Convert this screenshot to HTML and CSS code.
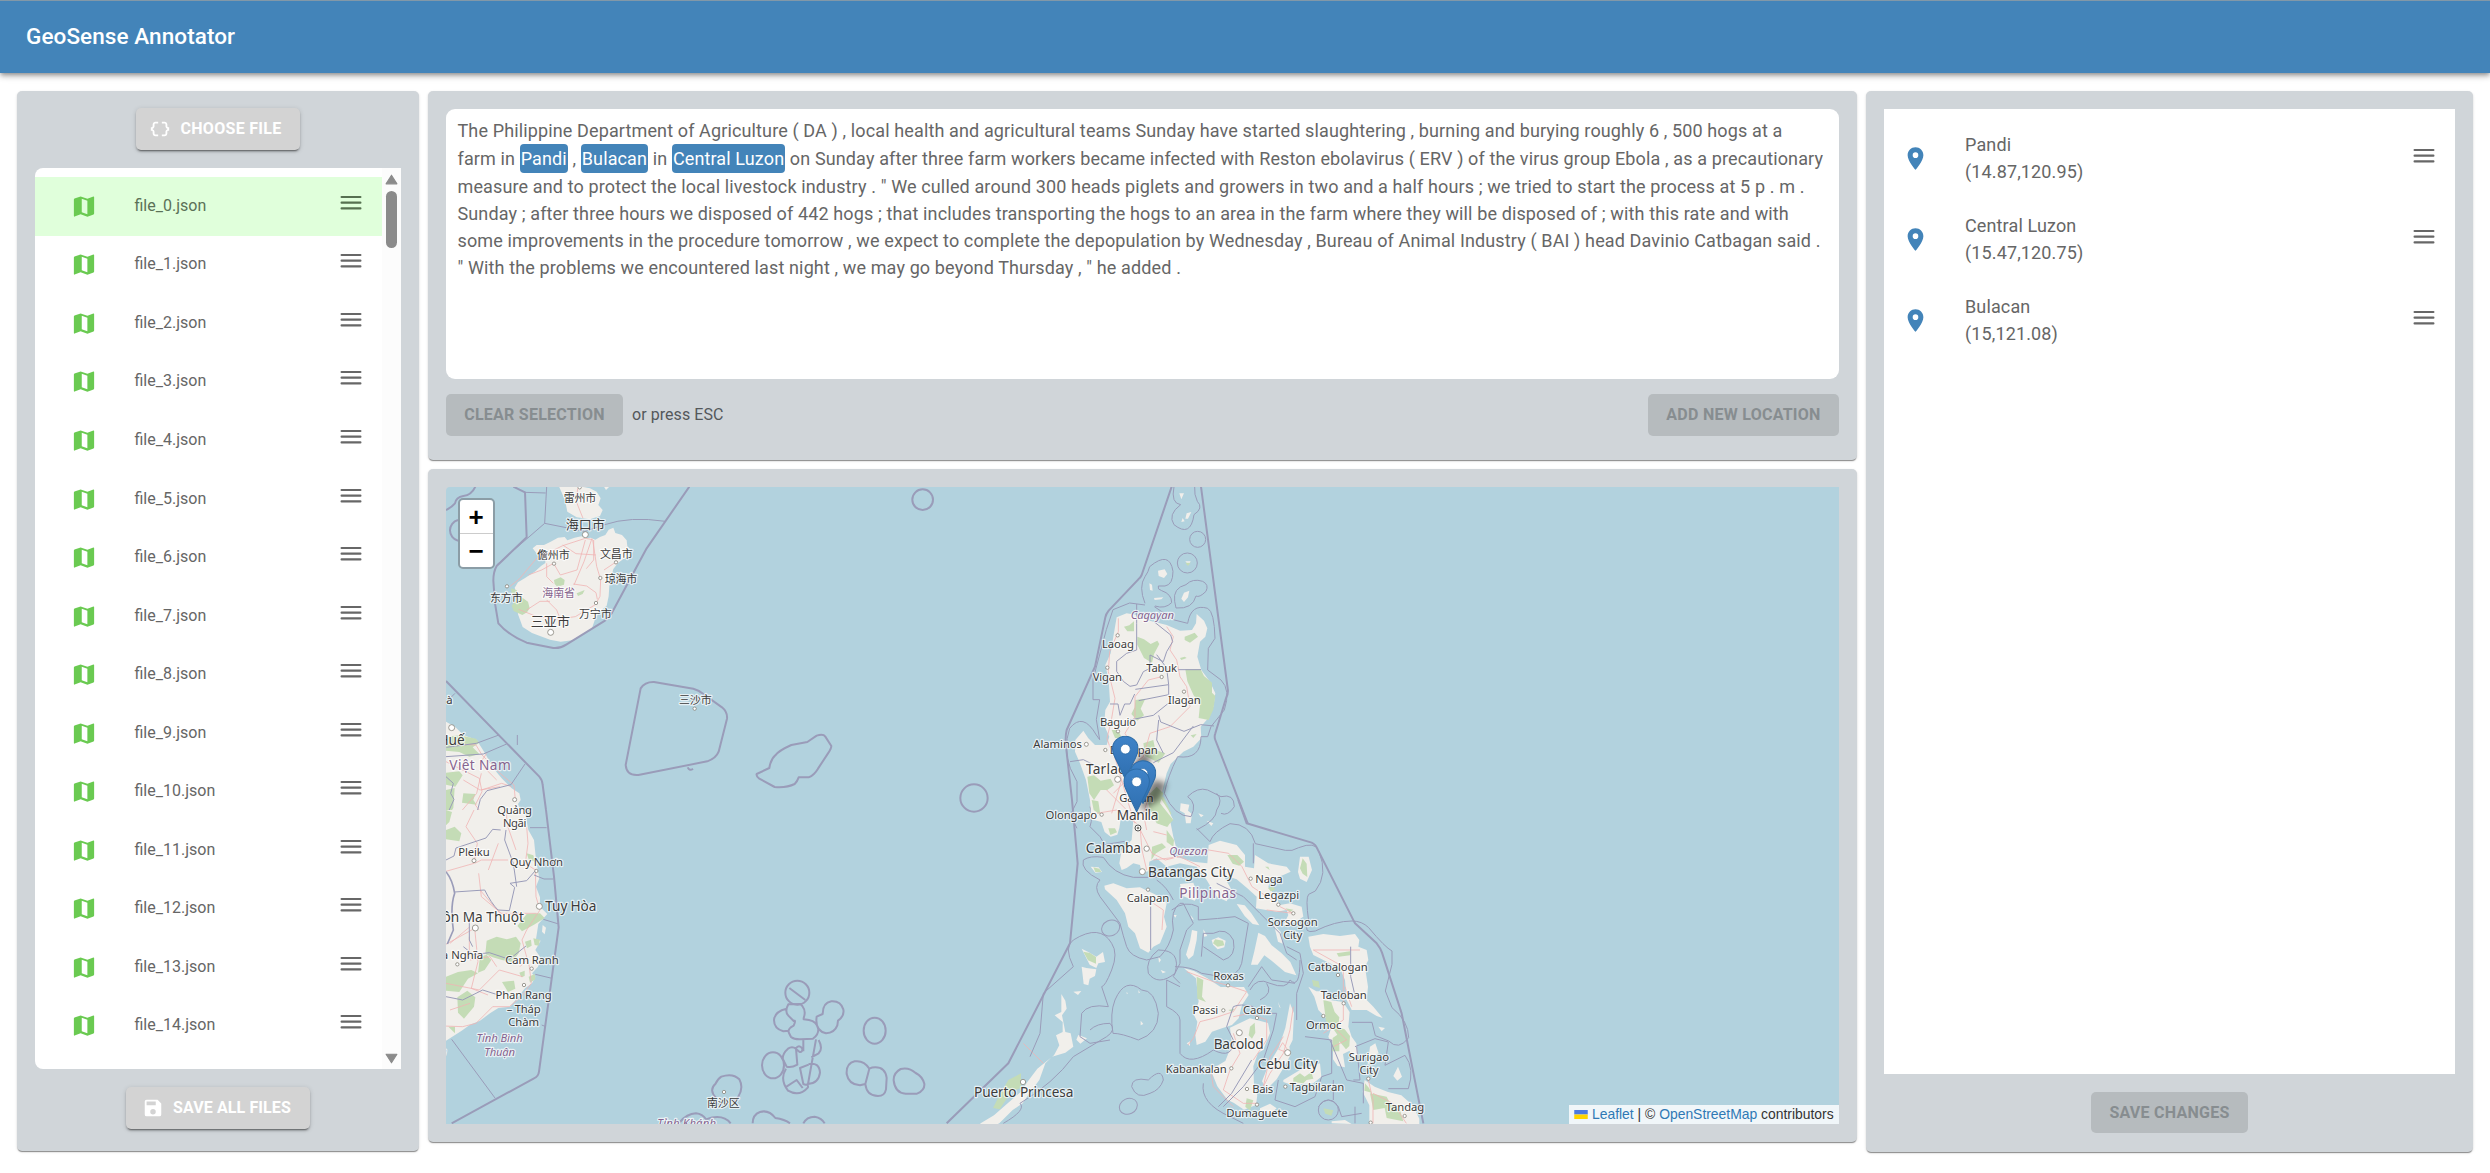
FILE: index.html
```html
<!DOCTYPE html>
<html lang="en">
<head>
<meta charset="utf-8">
<title>GeoSense Annotator</title>
<link rel="stylesheet" href="styles.css">
</head>
<body>
<svg class="sprite" aria-hidden="true">
  <symbol id="i-map" viewBox="0 0 24 24"><path d="M20.5 3l-.16.03L15 5.1 9 3 4.2 4.6C3.3 4.9 3 5.3 3 6v14.5c0 .28.22.5.5.5l.16-.03L9 18.9l6 2.1 4.9-1.7c.8-.3 1.1-.7 1.1-1.4V3.5c0-.28-.22-.5-.5-.5zM15 18.9l-5-1.8V5l5 1.9z"/></symbol>
  <symbol id="i-menu" viewBox="0 0 22 16"><path d="M1.600 .9h18.800a1.100 1.100 0 010 2.200h-18.800a1.100 1.100 0 010-2.200zm0 5.700h18.800a1.100 1.100 0 010 2.200h-18.800a1.100 1.100 0 010-2.200zm0 5.700h18.800a1.100 1.100 0 010 2.200h-18.800a1.100 1.100 0 010-2.200z"/></symbol>
  <symbol id="i-pin" viewBox="0 0 24 24"><path d="M12 2C8.13 2 5 5.13 5 9c0 5.25 7 13 7 13s7-7.75 7-13c0-3.87-3.13-7-7-7zm0 9.5a2.5 2.5 0 010-5 2.5 2.5 0 010 5z"/></symbol>
  <symbol id="i-save" viewBox="0 0 24 24"><path d="M17 3H5a2 2 0 00-2 2v14a2 2 0 002 2h14a2 2 0 002-2V7zm-5 16a3 3 0 110-6 3 3 0 010 6zm3-10H5V5h10z"/></symbol>
  <symbol id="i-braces" viewBox="0 0 24 24"><path d="M4 7v2c0 .55-.45 1-1 1H2v4h1c.55 0 1 .45 1 1v2c0 1.65 1.35 3 3 3h3v-2H7c-.55 0-1-.45-1-1v-2c0-1.3-.84-2.42-2-2.83v-.34C5.16 11.42 6 10.3 6 9V7c0-.55.45-1 1-1h3V4H7C5.35 4 4 5.35 4 7zm17 3c-.55 0-1-.45-1-1V7c0-1.65-1.35-3-3-3h-3v2h3c.55 0 1 .45 1 1v2c0 1.3.84 2.42 2 2.83v.34c-1.16.41-2 1.52-2 2.83v2c0 .55-.45 1-1 1h-3v2h3c1.65 0 3-1.35 3-3v-2c0-.55.45-1 1-1h1v-4z"/></symbol>
  <symbol id="i-marker" viewBox="0 0 25 41"><path d="M12.5.5C5.9.5.5 5.7.5 12.3c0 3 1.200 6 2.500 8.500L12.500 40.500 22 20.800c1.300-2.500 2.500-5.500 2.500-8.500C24.500 5.700 19.100.5 12.500.5z" fill="url(#pinfill)" stroke="#2e6da8"/><circle cx="12.500" cy="12.500" r="4.600" fill="#fff" stroke="#2e6da8" stroke-width=".7"/></symbol>
</svg>

<header class="appbar"><h1>GeoSense Annotator</h1></header>

<main class="layout">
  <section class="card files">
    <button class="btn raised choose"><svg><use href="#i-braces"/></svg>CHOOSE FILE</button>
    <div class="filebox">
      <ul class="filelist">
        <li class="on"><svg class="map-i"><use href="#i-map"/></svg><span>file_0.json</span><svg class="menu-i"><use href="#i-menu"/></svg></li>
        <li><svg class="map-i"><use href="#i-map"/></svg><span>file_1.json</span><svg class="menu-i"><use href="#i-menu"/></svg></li>
        <li><svg class="map-i"><use href="#i-map"/></svg><span>file_2.json</span><svg class="menu-i"><use href="#i-menu"/></svg></li>
        <li><svg class="map-i"><use href="#i-map"/></svg><span>file_3.json</span><svg class="menu-i"><use href="#i-menu"/></svg></li>
        <li><svg class="map-i"><use href="#i-map"/></svg><span>file_4.json</span><svg class="menu-i"><use href="#i-menu"/></svg></li>
        <li><svg class="map-i"><use href="#i-map"/></svg><span>file_5.json</span><svg class="menu-i"><use href="#i-menu"/></svg></li>
        <li><svg class="map-i"><use href="#i-map"/></svg><span>file_6.json</span><svg class="menu-i"><use href="#i-menu"/></svg></li>
        <li><svg class="map-i"><use href="#i-map"/></svg><span>file_7.json</span><svg class="menu-i"><use href="#i-menu"/></svg></li>
        <li><svg class="map-i"><use href="#i-map"/></svg><span>file_8.json</span><svg class="menu-i"><use href="#i-menu"/></svg></li>
        <li><svg class="map-i"><use href="#i-map"/></svg><span>file_9.json</span><svg class="menu-i"><use href="#i-menu"/></svg></li>
        <li><svg class="map-i"><use href="#i-map"/></svg><span>file_10.json</span><svg class="menu-i"><use href="#i-menu"/></svg></li>
        <li><svg class="map-i"><use href="#i-map"/></svg><span>file_11.json</span><svg class="menu-i"><use href="#i-menu"/></svg></li>
        <li><svg class="map-i"><use href="#i-map"/></svg><span>file_12.json</span><svg class="menu-i"><use href="#i-menu"/></svg></li>
        <li><svg class="map-i"><use href="#i-map"/></svg><span>file_13.json</span><svg class="menu-i"><use href="#i-menu"/></svg></li>
        <li><svg class="map-i"><use href="#i-map"/></svg><span>file_14.json</span><svg class="menu-i"><use href="#i-menu"/></svg></li>
      </ul>
      <div class="scroll">
        <svg viewBox="0 0 12 10"><path d="M6 1l5 8H1z"/></svg>
        <i class="thumb"></i>
        <svg class="down" viewBox="0 0 12 10"><path d="M6 9L1 1h10z"/></svg>
      </div>
    </div>
    <button class="btn raised saveall"><svg><use href="#i-save"/></svg>SAVE ALL FILES</button>
  </section>

  <div class="center">
    <section class="card textcard">
      <div class="doc">The Philippine Department of Agriculture ( DA ) , local health and agricultural teams Sunday have started slaughtering , burning and burying roughly 6 , 500 hogs at a farm&nbsp;in&nbsp;<mark>Pandi</mark> , <mark>Bulacan</mark> in <mark>Central Luzon</mark> on Sunday after three farm workers became infected with Reston ebolavirus ( ERV ) of the virus group Ebola , as a precautionary measure and to protect the local livestock industry . " We culled around 300 heads piglets and growers in two and a half hours ; we tried to start the process at 5 p . m . Sunday ; after three hours we disposed of 442 hogs ; that includes transporting the hogs to an area in the farm where they will be disposed of ; with this rate and with some improvements in the procedure tomorrow , we expect to complete the depopulation by Wednesday , Bureau of Animal Industry ( BAI ) head Davinio Catbagan said . "&nbsp;With the problems we encountered last night , we may go beyond Thursday , " he added .</div>
      <div class="actions">
        <button class="btn off clear">CLEAR SELECTION</button>
        <span class="hint">or press ESC</span>
        <button class="btn off add">ADD NEW LOCATION</button>
      </div>
    </section>

    <section class="card mapcard">
      <div class="map">
        <svg class="tiles" viewBox="446 487 1393 637">
          <defs>
            <linearGradient id="pinfill" x1="0" y1="0" x2="0" y2="1"><stop offset="0" stop-color="#3f83c8"/><stop offset="1" stop-color="#2f6fb0"/></linearGradient>
            <filter id="soft" x="-50%" y="-50%" width="200%" height="200%"><feGaussianBlur stdDeviation="9"/></filter>
          </defs>

          <!-- Hainan and central Vietnam -->
          <g transform="translate(430 460) scale(.33333)">
            <g class="land">
              <path d="M385 75L405 120 412 155 440 172 480 178 510 168 518 150 505 135 512 115 500 95 480 85 455 80z"/>
              <path d="M522 80l6 10 10-10z"/>
              <path d="M308 265l12-10 22 0 20-10 22-12 20-2 8 10 22-8 20-4 18 6 10-2 14 6 14-8 16-6 10-16 14-6 6 16 20 6 14 16 2 18 10 10-6 20-16 8-16 12-14 18-6 22-6 30-2 30-6 28-22 18-14 26-8 24-26 18-34 18-34 4-32-6-28-10-26-10-28-18-14-38-2-40-4-26-4-14 10-16 20-12 30-20 20-18 12-8 0-12-18-6z"/>
              <path d="M48 785L75 800 100 825 140 840 165 880 190 925 215 955 245 985 268 1000 272 1020 264 1032 290 1100 48 1100z"/>
            </g>
            <g class="wood">
              <path d="M260 415l14-4 20 14 5 20-8 12-14 8-26-12-6-16zM372 360l20-8 12 8-2 14-20 6-8-8zM243 385l18 6-2 10-14 2zM440 400l24-10-6 12-14 6z"/>
              <path d="M48 830l40-4 50 10 10 12-20 14 20 20-30 8-30-14-40-4zM48 938l40-4 10 12-22 34-28-6zM100 1000l36 2-6 18 10 14-44-6zM48 990l26-6-4 60-22 34z"/>
            </g>
            <g class="road">
              <path d="M443 85l-4 40 20 50M466 235l-68 22-80 40-50 60-28 22M466 235l22 4 12 80 12 40-2 50-14 25-60 36-60 8-60-10-50-20M486 235l-24 70-30 70M466 240l-25 90-50 15-20-35-36 20-40 15M430 372l40 6 28 20 4 20M350 420l30 30 12 30M398 255l40 26 60 4M522 330l36-24M491 240l0 60-22 26M290 450l40-26 30 0M350 310l0 40 20 20"/>
              <path d="M48 850l90 5 18 30 60 60 36 30 4 45M48 905l100 50 8 40-20 40 30 40M155 990l60-20 30 10M100 960l50 30 60-10M80 1070l60-70 14-60M170 880l-20 30 50 50"/>
            </g>
            <g class="line thin">
              <path d="M350 80l-6 110 120 24 60-20Q600 168 706 184M344 190L200 315M285 97l62 2M207 825l-68 25-90 12M230 852l-70 30-112 8M285 912l-42 62-72 18-20 26-10 40M75 700l-26 26"/>
              <path d="M48 950l22 20-8 30 10 18-18 40M262 855l0-30"/>
            </g>
            <g class="line">
              <path d="M136 80Q125 105 100 108 78 112 75 130 65 142 48 150M84 180a32 32 0 000 62M250 80l35 17 5 135L200 318Q190 335 190 362L195 430 205 490Q235 525 290 548L370 564Q390 566 410 553L525 482 545 460 650 265 778 80"/>
              <path d="M48 663L328 950Q337 960 338 975L348 1050"/>
              <path d="M632 685Q645 665 672 666L790 686Q806 690 820 702L876 742Q893 756 891 776L866 875Q858 895 832 904L625 945Q590 948 587 915zM773 922q6 12 16 4"/>
              <path d="M980 942l38-18q4-26 18-38 10-14 48-31l48-9 28-19q20-6 26 3l18 28q0 8-10 22l-30 46q-12 20-28 26l-30 0q-4 12-12 20-24 12-60 9l-46-25q-10-8-8-14z"/>
              <circle cx="1478" cy="119" r="31"/>
            </g>
            <g class="town"><circle cx="466" cy="224" r="9"/><circle cx="449" cy="82" r="5"/><circle cx="372" cy="311" r="5"/><circle cx="558" cy="307" r="5"/><circle cx="511" cy="354" r="5"/><circle cx="231" cy="379" r="5"/><circle cx="498" cy="429" r="5"/><circle cx="362" cy="517" r="9"/><circle cx="794" cy="746" r="5"/><circle cx="65" cy="803" r="9"/></g>
            <g class="label han">
              <text x="450" y="127" textLength="98">雷州市</text><text x="466" y="206" class="big" textLength="118">海口市</text><text x="370" y="297" textLength="98">儋州市</text><text x="559" y="293" textLength="98">文昌市</text><text x="573" y="369" textLength="98">琼海市</text><text x="386" y="411" textLength="98" class="region">海南省</text><text x="229" y="425" textLength="98">东方市</text><text x="361" y="499" class="big" textLength="118">三亚市</text><text x="496" y="474" textLength="98">万宁市</text><text x="796" y="731" textLength="98">三沙市</text>
            </g>
            <g class="label"><text x="49" y="732" class="start">à</text><text x="104" y="854" class="big end">Huế</text><text x="150" y="930" class="big region" textLength="184">Việt Nam</text></g>
          </g>

          <!-- southern Vietnam and the Spratlys -->
          <g transform="translate(430 810) scale(.33333)">
            <g class="land"><path d="M48 0L268 0 284 0 295 60 312 90 318 150 328 205 318 230 330 262 330 290 352 312 325 342 318 388 332 392 316 420 330 440 324 470 306 490 316 500 306 520 285 535 265 560 240 590 205 594 180 610 150 632 120 644 95 662 48 692z"/><path d="M338 345l10 8-4 20-8-8z"/></g>
            <g class="wood">
              <path d="M48 60l26-10 20 20-6 24-40-6zM48 0l18 6-8 30-10 10zM290 312l40-2 14 14-32 20-36 20-14-16zM290 130l20 6 6 20-20-8zM170 392l30-12 30 8 28-8 14 20-6 30-20 26-30-6-28-8-22-10zM48 500l36-14 40-6 20 10-30 16-26 40-40-4zM82 562l30-20 24 20-4 28-30 36-18-18zM150 440l20-6 14 16-20 30-20 8zM216 516l36-4 4 24-22 10zM285 395l18-6 2 18-14 8zM310 385l20 4-4 18-12-2zM296 500l18-8 2 16-16 10zM55 650l20 0 0 20zM268 488l16-6 0 16-10 4z"/>
            </g>
            <g class="road">
              <path d="M230 0l0 40 28 80M290 50l4 50-8 60 30 20 2 80 12 40-40 60-14 30 22 80 6 50-30 40-36 30-50 0-50 50-40 10-60-2M132 0l-24 50 34 50-10 60-84 24M146 190l8 70 60 50 60 4M134 160l20-10 80 0M134 355l-90 50M134 355l10 100-20 80 50 20M60 400l60-50M48 520l100 20 60-60 70 20M200 470l-20-30-60 10M205 100l-30 80M270 470l20-20M150 240l60 70 110 0M60 600l60-20M118 380l0 50-20 20"/>
            </g>
            <g class="line thin">
              <path d="M300 53l50 0M312 195l30 12 28 0M340 328l46 14M316 493l50 12M335 645l10 4M65 688l130 176"/>
              <path d="M74 246l90-6q20 40 40 60l34 2 16-70-14-12 50-8 26-30M48 150l24-12 6-24 90-30 20-26 24 2M228 60l-4 30 26 70 10 70M48 560l50 10 60-30 44 14M100 410l30 24 48-6 60 20 50-40M118 330l0 60 10 20"/>
              <path d="M48 185q20 25 26 65-14 40-4 110l-18 42" stroke-width="5"/>
            </g>
            <g class="line">
              <path d="M348 0L372 200 386 352 327 785Q325 800 312 805L65 940"/>
              <circle cx="1102" cy="548" r="36"/><path d="M1078 534l48 36M1075 583q-12 22 0 34l16 16q8-4 0 14-20 10-14 22l6 12q10 8 30 7l36-2q16-10 16-28-4-24-28-28l-16-2 0-4q8-20-4-36l-6-6zM1070 596q-36 8-38 34 0 26 28 34l16-2M1160 620q-6 42 28 50 26-2 34-24l2-14q20-14 16-34-8-26-36-24-26 4-26 38zM1120 690l0 34M1158 688l-24 134q-6 4-14 0l-10-48 26-10M1166 690q14 26 0 40l-22 12M1097 716q10-14 20 0 0 12-8 10zM1098 716q-12-8-24 0-16 14-16 30l12 24q14 4 32-6zM1068 776q-20 32 6 66 34 20 60-10l0-6M1066 832l34-22 18 24M1136 762q32-6 34 26-4 32-36 34"/>
              <ellipse cx="1029" cy="766" rx="33" ry="39"/><ellipse cx="1334" cy="662" rx="33" ry="39"/><path d="M1318 776q-16-26-44-22-26 6-24 38 6 32 40 34l16-4q4 36 38 36 20 0 24-20l2-34q-4-32-34-32-10 0-18 4zM1318 776l-12 46M1412 777q-22 12-21 34 4 38 36 40l34 0q24-10 22-30-6-22-26-32-20-18-45-12zM858 864q-22-24-2-42 8-16 18-22 34-12 54 8 14 26-4 54-8 10-14 6"/>
              <path d="M750 936q20-24 48-26 20 2 30 18 50-18 74 12M968 940q0-26 22-34 26-8 46 18 28 4 44 16M1120 940q10-20 34-20 22 4 30 20"/>
            </g>
            <g class="town"><circle cx="254" cy="-31" r="6"/><circle cx="132" cy="152" r="6"/><circle cx="319" cy="183" r="5"/><circle cx="328" cy="289" r="9"/><circle cx="136" cy="354" r="9"/><circle cx="82" cy="463" r="5"/><circle cx="305" cy="476" r="5"/><circle cx="282" cy="525" r="5"/><circle cx="882" cy="846" r="5"/></g>
            <g class="label">
              <text x="254" y="12" textLength="104">Quảng</text><text x="254" y="52" textLength="70">Ngãi</text><text x="132" y="137" textLength="94">Pleiku</text><text x="319" y="168" textLength="160">Quy Nhơn</text><text x="346" y="304" class="big start" textLength="153">Tuy Hòa</text><text x="282" y="336" class="big end">uôn Ma Thuột</text><text x="159" y="448" class="end">a Nghĩa</text><text x="306" y="461" textLength="160">Cam Ranh</text><text x="281" y="567" textLength="169">Phan Rang</text><text x="281" y="608" textLength="102">– Tháp</text><text x="281" y="647" textLength="92">Chàm</text>
              <text x="209" y="697" class="region it" textLength="139">Tỉnh Bình</text><text x="209" y="738" class="region it" textLength="92">Thuận</text><text x="770" y="951" class="region it" textLength="176">Tỉnh Khánh</text><text x="50" y="736" class="region it end">n</text>
            </g>
            <g class="label han"><text x="880" y="891" textLength="98">南沙区</text></g>
          </g>

          <!-- Luzon, south half and the Visayas -->
          <g transform="translate(940 800) scale(.33333)">
            <g class="land">
              <path d="M450-20L456 30 462 60 484 66 494 96 512 110 532 104 538 84 545 40 565 40 580 60 575 120 545 150 538 190 545 210 560 204 580 190 600 195 605 218 625 214 628 185 650 175 680 200 720 190 770 200 800 240 830 290 860 304 875 270 850 225 890 238 922 265 950 290 948 325 1010 335 1040 330 1045 345 1030 375 1060 370 1090 350 1085 320 1050 310 1020 315 1005 285 985 262 990 240 1030 225 1052 215 1040 200 985 190 945 165 942 205 915 200 915 165 890 135 840 122 806 135 802 190 760 185 690 165 708 140 700 110 690 60 660-20z"/>
              <path d="M493 257L520 250 560 265 600 262 660 290 680 310 672 350 680 380 660 430 640 440 625 458 600 445 585 400 565 380 555 340 530 300 495 268z"/>
              <path d="M722 10l26 4-4 18 12 10-4 28-14 0-4-30-14-8zM775 40l16 6-8 6zM800 62l20 8-6 8zM720 252l40-4 14 40-10 14-36-14zM1080 170l26 0 10 40-16 36-20-10-6-20zM452 200l24 2 10 14-20 2zM700 345l10 0-4 8zM752 345l10 14-6-2zM756 390l16 4-2 26-10 46-14 12-8-14 12-40zM790 388l12 20-10 2zM815 420l20-8 22 10-4 20-20 6-14-14zM890 312l24 4 20 24 24 36-20-4-24-24zM955 398l20 10 20 28 30 24 26 26 18 40-34-10-40-34-22-16-20 28-20 0 10-40zM1002 375l20 20 6 36-14-6zM1105 410L1150 402 1200 408 1245 402 1258 420 1255 440 1280 450 1285 480 1275 500 1284 560 1280 600 1300 620 1328 654 1310 648 1280 630 1235 630 1220 600 1215 540 1200 505 1180 495 1120 465 1110 440zM1105 560l24 14 20 0 20 26 40 6 20 30-4 44 10 30 14 20 6 36-20 10-6-24-20 10 6 40-22-4-14-20 0-40-14-28 10-30-20-30-20-20-12-40z"/>
              <path d="M425 446l20 10 24 14 20-14 6 30-20 4-6 14-20-10zM425 500l14 4 30 4-4 20-16 8-4 20-14-4zM400 575l24-2-10 12zM364 582l12 20 4 24-14 20 10 50 16 4 8 40-24 18-40 12-20 20-18 50-30 40-20 30-30 20-40 40-90 40 34-40 40-24 80-70 20-30 30-40 50-40 16-30-10-30 20-10 0-30-24-20 20-10zM415 705l26 10-20 16-12-12z"/>
              <path d="M732 505l30 8 40 22 40 26 70 0 14 24-20 30-10 40-20 20-30 10-30 10-20 30-26 10-4-30 6-40-10-20 14-40-8-70zM930 655l54 14 6 30-20 50-16 10-14 40 2 56 10 30-4 30-36 14-30-20-20-10-30-40-20-50 44-26 20-50-6-50zM1050 610l12 30-4 80-10 20 4 24-18 34-24 40-30 30-14-24 20-50 30-50 20-60zM1030 840l50-30 60-20 4 40-24 20-66 4-24-8zM1014 605l8 20-4-4zM960 925l30-14 20 14-20 16-30-4zM740 730l10-6 0 14zM1374 800l12 30-14 12-12-14zM1274 840l30 20 40 16 40 10 34 30 20 40 0 20-150 0 0-60-20-40zM1175 970l0-6 40-4 20 12zM1290 740l16-10 10 30-20 10-14 30zM1315 680l20 4-10 10zM595 570l5 8-4 2zM602 662l8 10-8 4zM560 575l4 6-4 0zM655 470l8 10-6 8zM662 510l16 6-10 4z"/>
            </g>
            <g class="wood">
              <path d="M640-10l30 0 24 50-10 40-30-10-4-30zM505 85l20 0 6 12-20 8zM680 90l22 30-2 20-20-14zM636 140l30-10 12 12-30 18-14 20zM862 165l30 0 20 20-14 12-20-6zM975 200l10 0 4 10zM1088 175l12 16 2 40-14-10-8-16zM460 202l18 4 6 10-18 0zM984 264l16-4 6 10-14 4zM1036 325l24 4-10 8zM825 418l24 4 4 14-20 4-14-10zM430 455l20 4 18 12 0 20-24-10zM1116 540l20 4 4 20-20-6zM1190 460l40-6 0 12-34 4zM1150 600l24 6 10 30 14 16-4 30 20 6 16 20-2 30-10 10-20-24 0 30-22 0 2-40 14-10-14-20-20-20zM770 530l20 10-4 50 12 16-26-10zM930 680l14-12 2 30-10 18-10-10zM865 630l20-4-10 10zM1060 834l20-14 14 10 20-14 6 20-20 4-10 10-30-4zM920 895l20 6-10 30-14-10zM205 840l38-20 0 44-30 10-14 24-20 30-20-4 20-40zM1275 850l12 14 8 14-22-6zM1290 880l50 10 10 20 30 20 10 34-50-10-6-30-34 6zM1150 925l30 6-6 16-18-6z"/>
            </g>
            <g class="road">
              <path d="M450 20l70 22 50-5M600 80l6 70 14 60M596 80l40 80 40 20 80-20 50-10 60 10 40 40 30 60 60 40M640 180l80-10 60 30M640 95l40 10M1020 320l40 20-80-10M740 515l80 30 40 10 60 20-40 60-60 20-40 10-20 50-16 20M880 650l50-10 50 20 0 60-40 60M880 700l20 60-30 50-20 60 60 40 40 0M810 800l10 60 60 60M1060 620l-10 70-20 70-40 60-20 40 20-90 40-60M1042 758l-26-10 12-20 14 20M1150 700l60-40 0-120 0-40-90-50 140 0M1215 560l20 60M640 310l30 20-4 60M1190 690l30 30-40 20M1285 840l14 60 0 70M1299 880l60 30 40 60M250 730l60 60"/>
            </g>
            <g class="line thin">
              <path d="M632 320l0 130M1232 440l0 90 16 70M450 20q10 30 0 60l30 30 14 24 60-10M430 180q20-14 60-8 30 50 90 60l70 0M430 180q-10 30 50 60-20 20 0 50l60 80q10 40 20 70 10 30 60 40l40-10q30-30 40-80-10-60 20-80l10 0 30 60-20 20-20 60 0 40-20 40 20 20M650 240q30 20 50 60M695 330q40-30 80-10l0 40q60-4 110-10l40 20-10 60-10 60q-10 40-60 40l-60-10q-30-20-80-20M790 440l60 40q40-10 30-60-20-40-60-20l-30 0-6 70M770 90q60-30 60-60 20-30 0-50M770 85l40 40q10-30 60-54 60 0 76 60l90 20q20 4 40-8 50-20 60 10 30 70-10 120l-20 10q-10 10 0 80-20 40 20 30 60-30 110-30 30 0 50 20 50 60 70 70l0 40-20 80 20 50q50 40 50 90-30 40-60 10l-40-16-10-40-60 0M940 130l0 60M830 250l80 40 50 50 60 60 20 60 30 20M1040 440l40 20 10 60-20 60 0 80M930 570q20-40 60-20 50 20 60-10 30 30 30-60M925 560l40-60 30 40 70 10M960 600q40-20 20-50M1000 690l10-50-60 0M720 560l-40-20 0 80q40 20 40 40l0 100q30 40 100-10 60 30 60-30l-20-40 20-60q20-10 60 0M1000 690l-30 90-60 80-60 60M790 850q-10 60 80 100l40 20M1015 840l-10 60 60 20 60-30 20-60 30-10 0-100-80-10M1170 720l50 120 50 10 0 60M1245 740l60-24 40 10-10 70 60-30q30 40 10 100l-60 0M1250 740l10 100-20 0M1180 840l0 60M1135 920q30-40 60 0l10 30 60-10M1245 920l0 50M400 500q-30-60 0-80 80-50 115 10 20 30 0 80-20 50-30 50l20 60q-60-10-80 20l-5 70 30 20 60-10M400 500l-90 80-10 120-30 70M190 970q70-40 50-60 100-60 160-140l100-60q30-20 10-40-40 0-60 20M525 600q30-70 80-30 40 0 50 70 0 60-60 80-50-20-76-20-10-60 6-100zM575 860q0-30 50-20 40-40 45 0-10 30-40 40-40 20-55-20M625 520q-10-40 30-70 70 0 50 70-50 40-80 0M935 780l-60 100-40 40"/>
              <ellipse cx="512" cy="384" rx="28" ry="23" transform="rotate(-25 512 384)"/><ellipse cx="565" cy="919" rx="28" ry="23" transform="rotate(-25 565 919)"/>
              <circle cx="1165" cy="930" r="30"/>
            </g>
            <g class="line">
              <circle cx="102" cy="-6" r="41"/>
              <path d="M396 0L413 190 390 430 205 790 20 970M895 0L920 70 1115 128Q1127 133 1133 148L1245 370 1310 430Q1322 445 1326 458L1385 640 1450 970"/>
            </g>
          </g>

          <!-- Luzon, north half -->
          <g transform="translate(980 480) scale(.33333)">
            <g class="land">
              <path d="M410 412L440 400 470 405 500 420 560 435 600 452 636 450 648 430 650 402 672 422 682 445 676 470 660 485 652 530 664 570 690 605 706 640 700 680 680 720 662 740 664 775 640 800 610 815 572 852 560 880 550 920 542 955 565 990 580 1020 335 1020 330 960 318 900 300 850 285 815 286 780 310 752 325 775 345 795 380 795 388 770 372 735 376 690 390 665 386 600 376 555 392 520 400 470z"/>
              <path d="M534 272l20-4 8 14-10 12-16-6zM598 40l14 0-8 18zM620 100l14-4-10 20-8 0zM608 114l6 10-10 2zM508 310l8 4 2 18-8-2zM522 354l28-2-6 6-20 2zM612 338l16-6-4 20-12 14-8-10zM616 244l16 0-6 12z"/>
            </g>
            <g class="wood">
              <path d="M472 470l20 8 20 14 20-10 6 10-16 30-6 26-24-14-20-40zM616 568l46 0 10 20 24 20 0 30 10 10-6 40-14 32-30-6 4-40-20-30-18-40zM614 470l30-12 10 12-24 18-16-8zM600 534l14-4 6 4-16 6zM432 440l16-4 14-12 0 30-20 0zM466 660l30-4-14 30 10 20-20 16-18-20 10-20zM490 790l30-10 6 30 30 10-20 28-40-20zM322 890l20-4 20 16 30-6 10 20-20 14-20 0-20 30-14-20zM335 960l20 4 6 40-20-14zM530 920l20 20-10 30 40 50-20 20-30-10-20-40-10-40zM395 750l20 0 10 24-20 0zM616 248l16 0-8 10zM632 766l18-4-10 12z"/>
            </g>
            <g class="road">
              <path d="M415 415l0 40-26 60-4 60 20 80-10 60-14 60 10 30M560 440l20 30-10 40 20 30 10 50 20 30 10 60-60 60-60 20-20 70-40 30M545 590l-40 10-40 50 0 60-30 50 30 50M395 800l30 100-30 100M425 900l20 70 20 60M380 930l60 60M460 880l50 60-20 60 10 50M350 1000l60-10 60 40M400 940l30-30 60 20"/>
            </g>
            <g class="line thin">
              <path d="M470 400l0 30 0 80-30 10-30 24 0 30 20 30 20 15 20-4 20-40 20-10 0-40 40 20 10-30 18-30-6-20-50-40M530 524l30 40 6 50-100 14M595 569l68 0M566 614l0 30-90 18M390 672l24 0 6 34 14-34 16 0 14-30M450 720l70-14 50-40M536 706l6 20 70 28 50-20 40 4M640 738l-60 80-60 30M536 720l-6 60 20 40M270 845l40-6 60 30"/>
              <path d="M495 375l-46-6-50 20-20 60-40 150 0 60 20 0-10 60 10 60-10-14q-40-70-80-20-20 60 2 120l20 40 0 60-20 40 20 40M523 380l60 40 40 10q10-60 60-45 20 10 22 90l-20 30-2 65 40 30q30 30 10 90l-40 50-10 30-20 0q0 70-70 60-30 60-40 110 30 70 80 70 20-40-10-60 30-30 60-20l40 20q40-10 40 30-20 30-40 20"/>
              <path d="M582 20q-10 50 20 54-40 30-20 60 50 40 60-30 30-20 10-40-10-20-8-44M495 370q-20-50 0-80 10-14 14-30 60-50 70 14 0 40-24 44l-20 0q-4 10 10 14 30 10 30 36-20 20-50 10M584 364q-6-40 34-50 20-20 50-10 20 10 10 30-20 20-30 14-10 40-60 36zM470 372l0 30"/>
              <circle cx="653" cy="178" r="24"/><circle cx="622" cy="249" r="30"/>
            </g>
            <g class="line"><path d="M575 20L485 285Q482 292 475 298L386 392Q378 402 376 412L345 560 260 750Q256 765 257 790L276 960M663 20L743 625Q746 640 738 655L706 760Q702 770 706 780L803 1030"/></g>
          </g>

          <g transform="translate(940 800) scale(.33333)">
            <g class="town"><circle cx="485" cy="44" r="5"/><circle cx="594" cy="84" r="9" stroke="#333"/><circle cx="594" cy="84" r="3" fill="#333"/><circle cx="620" cy="146" r="8"/><circle cx="607" cy="215" r="9"/><circle cx="624" cy="269" r="5"/><circle cx="932" cy="236" r="5"/><circle cx="1015" cy="314" r="5"/><circle cx="1060" cy="340" r="5"/><circle cx="864" cy="556" r="5"/><circle cx="850" cy="631" r="5"/><circle cx="951" cy="654" r="5"/><circle cx="1194" cy="525" r="5"/><circle cx="1211" cy="610" r="5"/><circle cx="1150" cy="648" r="5"/><circle cx="898" cy="698" r="9"/><circle cx="1043" cy="758" r="9"/><circle cx="874" cy="805" r="5"/><circle cx="921" cy="867" r="5"/><circle cx="1036" cy="860" r="5"/><circle cx="951" cy="914" r="5"/><circle cx="1285" cy="836" r="5"/><circle cx="1394" cy="948" r="5"/><circle cx="1292" cy="968" r="5"/><circle cx="249" cy="846" r="8"/></g>
            <g class="label">
              <text x="394" y="56" textLength="155">Olongapo</text><text x="593" y="61" class="big" textLength="125">Manila</text><text x="520" y="159" class="big" textLength="165">Calamba</text><text x="745" y="164" class="region it" textLength="115">Quezon</text><text x="753" y="230" class="big" textLength="258">Batangas City</text><text x="987" y="248" textLength="82">Naga</text><text x="624" y="307" textLength="127">Calapan</text><text x="803" y="293" class="region big" textLength="170">Pilipinas</text><text x="1016" y="298" textLength="123">Legazpi</text><text x="1058" y="377" textLength="150">Sorsogon</text><text x="1058" y="418" textLength="57">City</text><text x="1193" y="513" textLength="180">Catbalogan</text><text x="866" y="541" textLength="92">Roxas</text><text x="1211" y="596" textLength="138">Tacloban</text><text x="796" y="641" textLength="77">Passi</text><text x="951" y="641" textLength="84">Cadiz</text><text x="1151" y="686" textLength="106">Ormoc</text><text x="896" y="746" class="big" textLength="150">Bacolod</text><text x="1043" y="806" class="big" textLength="180">Cebu City</text><text x="1287" y="783" textLength="121">Surigao</text><text x="1287" y="823" textLength="57">City</text><text x="769" y="818" textLength="183">Kabankalan</text><text x="968" y="879" textLength="63">Bais</text><text x="1131" y="873" textLength="164">Tagbilaran</text><text x="951" y="951" textLength="184">Dumaguete</text><text x="1395" y="934" textLength="115">Tandag</text><text x="251" y="890" class="big" textLength="298">Puerto Princesa</text>
            </g>
          </g>
          <g transform="translate(980 480) scale(.33333)">
            <g class="town"><circle cx="413" cy="466" r="5"/><circle cx="382" cy="563" r="5"/><circle cx="545" cy="591" r="5"/><circle cx="612" cy="635" r="5"/><circle cx="414" cy="754" r="5"/><circle cx="319" cy="793" r="6"/><circle cx="376" cy="810" r="5"/><circle cx="413" cy="898" r="9"/></g>
            <g class="label">
              <text x="517" y="418" class="region it" textLength="130">Cagayan</text><text x="414" y="503" textLength="96">Laoag</text><text x="545" y="577" textLength="92">Tabuk</text><text x="382" y="604" textLength="88">Vigan</text><text x="613" y="672" textLength="98">Ilagan</text><text x="414" y="738" textLength="108">Baguio</text><text x="233" y="804" textLength="146">Alaminos</text><text x="461" y="823" textLength="144">Dagupan</text><text x="376" y="883" class="big" textLength="116">Tarlac</text><text x="469" y="965" textLength="103">Gapan</text>
            </g>
            <g filter="url(#soft)" fill="#000" opacity=".5"><path d="M450 880l34-60 30 6-20 54zM480 980l40-80 40 10-20 50-50 30z"/></g>
            <use href="#i-marker" x="396" y="767" width="80" height="132"/>
            <use href="#i-marker" x="449" y="840" width="80" height="132"/>
            <use href="#i-marker" x="430" y="865" width="80" height="132"/>
          </g>
        </svg>
        <div class="zoom"><span>+</span><span>−</span></div>
        <div class="attr"><svg viewBox="0 0 12 8"><path fill="#4C7BE1" d="M0 0h12v4H0z"/><path fill="#FFD500" d="M0 4h12v4H0z"/></svg><span><a>Leaflet</a> | © <a>OpenStreetMap</a> contributors</span></div>
      </div>
    </section>
  </div>

  <section class="card locs">
    <ul class="loclist">
      <li><svg class="pin-i"><use href="#i-pin"/></svg><div>Pandi<br>(14.87,120.95)</div><svg class="menu-i"><use href="#i-menu"/></svg></li>
      <li><svg class="pin-i"><use href="#i-pin"/></svg><div>Central Luzon<br>(15.47,120.75)</div><svg class="menu-i"><use href="#i-menu"/></svg></li>
      <li><svg class="pin-i"><use href="#i-pin"/></svg><div>Bulacan<br>(15,121.08)</div><svg class="menu-i"><use href="#i-menu"/></svg></li>
    </ul>
    <button class="btn off savech">SAVE CHANGES</button>
  </section>
</main>
</body>
</html>
```
FILE: styles.css
```css
* { box-sizing: border-box; }
body { margin: 0; height: 1173px; overflow: hidden; background: #fff; color: #666; font-family: Roboto, "Liberation Sans", sans-serif; font-size: 18px; line-height: 27px; }
ul { list-style: none; margin: 0; padding: 0; }
.sprite { position: absolute; width: 0; height: 0; }

.appbar { height: 73px; padding: 0 26px; display: flex; align-items: center; background: #4384b9; border-top: 1px solid #8298a8; box-shadow: 0 2px 4px -1px rgba(0,0,0,.3), 0 4px 5px rgba(0,0,0,.16), 0 1px 10px rgba(0,0,0,.12); }
.appbar h1 { margin: 0; padding-bottom: 2px; font-size: 22.5px; font-weight: 500; color: #fff; letter-spacing: .08px; }

.layout { display: flex; gap: 9px; padding: 18px 17px 0; align-items: flex-start; }
.card { background: #d0d5d9; border-radius: 5px; box-shadow: 0 2px 1px -1px rgba(0,0,0,.3), 0 1px 1px rgba(0,0,0,.14), 0 1px 3px rgba(0,0,0,.12); }

.btn { display: flex; align-items: center; justify-content: center; height: 42px; padding: 0; border: 0; border-radius: 5px; font: 700 16px/1 Roboto, sans-serif; letter-spacing: .26px; white-space: nowrap; }
.raised { background: #d3d3d3; color: #fff; box-shadow: 0 3px 1px -2px rgba(0,0,0,.3), 0 2px 2px rgba(0,0,0,.2), 0 1px 5px rgba(0,0,0,.14); }
.raised svg { width: 22px; height: 22px; margin-right: 9px; fill: #fff; }
.off { background: #b6bbbe; color: #878d90; }

.files { width: 402px; height: 1060px; padding: 17px 18px 0; display: flex; flex-direction: column; align-items: center; }
.choose { width: 164px; padding-right: 5px; letter-spacing: .3px; }
.saveall { width: 184px; padding-right: 3px; letter-spacing: .1px; }
.filebox { width: 366px; height: 901px; margin: 18px 0; display: flex; background: #fff; border-radius: 8px 0 0 8px; overflow: hidden; }
.filelist { flex: 1; padding-top: 9px; }
.filelist li { height: 58.55px; display: flex; align-items: center; padding-left: 35px; font-size: 16px; }
.filelist li.on { background: #e0ffdb; }
.filelist span { flex: 1; padding-left: 36.500px; position: relative; top: -1px; }
.map-i { width: 28px; height: 27px; fill: #6aca51; }
.menu-i { width: 22px; height: 16px; fill: #676767; }
.filelist .menu-i { margin: 0 20.5px 7px 0; }
.on .menu-i { fill: #567050; }
.on span { color: #5b7157; }
.scroll { width: 19px; background: #fcfcfc; display: flex; flex-direction: column; align-items: center; padding: 6px 0 5px; }
.scroll svg { width: 13px; height: 11px; fill: #8b8b8b; stroke: #8b8b8b; stroke-width: 1; stroke-linejoin: round; }
.thumb { width: 11px; height: 57px; margin-top: 6px; border-radius: 6px; background: #8b8b8b; }
.scroll .down { margin-top: auto; }

.center { width: 1429px; display: flex; flex-direction: column; gap: 9px; }
.textcard { height: 369px; padding: 18px 18px 0; }
.doc { height: 270px; padding: 7.5px 9px 0 11.5px; background: #fff; border-radius: 9px; letter-spacing: .128px; }
mark { display: inline-block; height: 29px; line-height: 29px; padding: 0 1px; background: #4384b9; color: #fff; border-radius: 4px; }
.actions { display: flex; align-items: center; margin-top: 15px; }
.clear { width: 177px; }
.hint { margin: -1px 0 0 9px; font-size: 16px; letter-spacing: .06px; color: #54585b; }
.add { width: 191px; margin-left: auto; }

.mapcard { height: 673px; padding: 18px; }
.map { position: relative; height: 637px; background: #b2d2de; border-radius: 4px 0 0 0; overflow: hidden; }
.tiles { display: block; width: 1393px; height: 637px; }
.land { fill: #f1efeb; }
.wood { fill: #c4dcb6; }
.road { fill: none; stroke: #f0b4b4; stroke-width: 2.4; stroke-linejoin: round; }
.line { fill: none; stroke: #9a9cb9; stroke-width: 6; stroke-linejoin: round; }
.thin { stroke-width: 3; }
.town { fill: #fff; stroke: #8a8880; stroke-width: 2.5; }
.label { font-family: "Noto Sans", sans-serif; font-size: 34px; fill: #3c3c3c; text-anchor: middle; paint-order: stroke; stroke: rgba(255,255,255,.7); stroke-width: 7px; stroke-linejoin: round; }
.han { font-family: "Noto Sans CJK SC", sans-serif; font-size: 33px; }
.big { font-size: 41px; }
.han .big { font-size: 39px; }
.region { fill: #86648f; }
.it { font-style: italic; }
.start { text-anchor: start; }
.end { text-anchor: end; }

.zoom { position: absolute; left: 11.5px; top: 11px; width: 37px; border: 2px solid #8b9da6; border-radius: 5px; background: #fff; overflow: hidden; color: #000; }
.zoom span { display: block; height: 33px; text-align: center; font: 700 26px/34px "Liberation Sans", sans-serif; }
.zoom span + span { border-top: 1px solid #ccc; height: 34px; }
.attr { position: absolute; right: 0; bottom: 0; width: 270px; height: 19px; padding-left: 5px; display: flex; align-items: center; gap: 4px; background: rgba(255,255,255,.8); font: 13.9px/19px "Liberation Sans", sans-serif; color: #333; white-space: nowrap; }
.attr svg { width: 14px; height: 9px; }
.attr a { color: #2f79b5; }

.locs { width: 607px; height: 1061px; padding: 18px 18px 0; display: flex; flex-direction: column; align-items: center; }
.loclist { width: 571px; height: 965px; background: #fff; padding-top: 9px; letter-spacing: .13px; }
.loclist li { height: 81px; display: flex; align-items: center; padding: 0 20.5px 0 18px; }
.loclist div { flex: 1; padding-left: 36px; margin-top: -2px; }
.pin-i { width: 27px; height: 27px; fill: #4384b9; }
.loclist .menu-i { margin-bottom: 5px; }
.savech { width: 157px; margin-top: 18px; height: 41px; }
```
